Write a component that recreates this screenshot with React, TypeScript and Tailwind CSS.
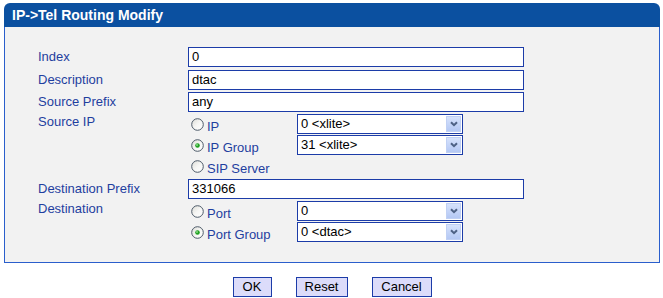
import React from 'react';

const Radio = ({ checked }: { checked?: boolean }) => (
    <svg width="13" height="13" viewBox="0 0 13 13" className="shrink-0">
        <defs>
            <linearGradient id="radioFill" x1="0" y1="0" x2="1" y2="1">
                <stop offset="0" stopColor="#dcdcd6" />
                <stop offset="0.5" stopColor="#f6f6f4" />
                <stop offset="1" stopColor="#ffffff" />
            </linearGradient>
        </defs>
        <circle cx="6.5" cy="6.5" r="5.8" fill="url(#radioFill)" stroke="#4d5a68" strokeWidth="1" />
        {checked && (
            <>
                <circle cx="6.5" cy="6.5" r="2.3" fill="#21a121" />
                <circle cx="6" cy="6" r="0.9" fill="#8fe08f" />
            </>
        )}
    </svg>
);

const Select = ({ value }: { value: string }) => (
    <div className="w-[166px] h-[20px] border border-[#1c3ca8] bg-white flex">
        <span className="flex-1 pl-[3px] leading-[18px] text-black whitespace-pre">{value}</span>
        <div className="w-[17px] h-[18px] p-[1px]">
            <div className="w-full h-full bg-gradient-to-b from-[#d6e2fc] to-[#b4c8f4] border border-[#c0d0f4] flex items-center justify-center">
                <svg width="8" height="6" viewBox="0 0 8 6">
                    <path d="M1 1.2 L4 4.2 L7 1.2" fill="none" stroke="#4d6185" strokeWidth="2" />
                </svg>
            </div>
        </div>
    </div>
);

const TextInput = ({ value }: { value: string }) => (
    <div className="w-[336px] h-[20px] border border-[#1c3ca8] bg-white pl-[3px] leading-[18px] text-black">
        {value}
    </div>
);

const Field = ({ label, value, mb }: { label: string, value: string, mb: string }) => (
    <div className={`flex items-center h-[20px] ${mb}`}>
        <div className="w-[150px] text-[#1f3f9f]">{label}</div>
        <TextInput value={value} />
    </div>
);

const Choice = ({ label, checked, select }: { label: string, checked?: boolean, select?: string }) => (
    <div className="flex items-start h-[21px]">
        <div className="w-[109px] flex items-start pl-[3px]">
            <div className="mt-[4px]"><Radio checked={checked} /></div>
            <span className="ml-[3px] mt-[5px] leading-[15px] text-[#1f3f9f]">{label}</span>
        </div>
        {select !== undefined && <Select value={select} />}
    </div>
);

export default function App() {
    return (
        <div className="bg-white min-h-screen font-['Liberation_Sans',Arial,sans-serif] text-[13px]">
            <div className="ml-[4px] pt-[3px] w-[656px]">
                <div className="h-[24px] bg-[#0b50a0] rounded-t-[6px] pl-[8px] flex items-center text-white font-bold text-[14px]">
                    IP-&gt;Tel Routing Modify
                </div>
                <div className="bg-[#f2f2f2] border-x border-b border-[#2a5ecc] pt-[20px] pb-[19px] pl-[33px]">
                    <Field label="Index" value="0" mb="mb-[3px]" />
                    <Field label="Description" value="dtac" mb="mb-[2px]" />
                    <Field label="Source Prefix" value="any" mb="mb-[2px]" />

                    <div className="flex mb-[2px]">
                        <div className="w-[150px] leading-[15px] text-[#1f3f9f]">Source IP</div>
                        <div className="flex flex-col">
                            <Choice label="IP" select="0 <xlite>" />
                            <Choice label="IP Group" checked select="31 <xlite>" />
                            <Choice label="SIP Server" />
                        </div>
                    </div>

                    <Field label="Destination Prefix" value="331066" mb="mb-[2px]" />

                    <div className="flex">
                        <div className="w-[150px] leading-[15px] text-[#1f3f9f]">Destination</div>
                        <div className="flex flex-col">
                            <Choice label="Port" select="0" />
                            <Choice label="Port Group" checked select="0 <dtac>" />
                        </div>
                    </div>
                </div>

                <div className="flex justify-center gap-[24px] mt-[14px]">
                    <button className="w-[39px] h-[20px] bg-[#dcdcfa] border border-[#1c3ca8] text-black leading-[18px]">OK</button>
                    <button className="w-[52px] h-[20px] bg-[#dcdcfa] border border-[#1c3ca8] text-black leading-[18px]">Reset</button>
                    <button className="w-[60px] h-[20px] bg-[#dcdcfa] border border-[#1c3ca8] text-black leading-[18px]">Cancel</button>
                </div>
            </div>
        </div>
    );
}
